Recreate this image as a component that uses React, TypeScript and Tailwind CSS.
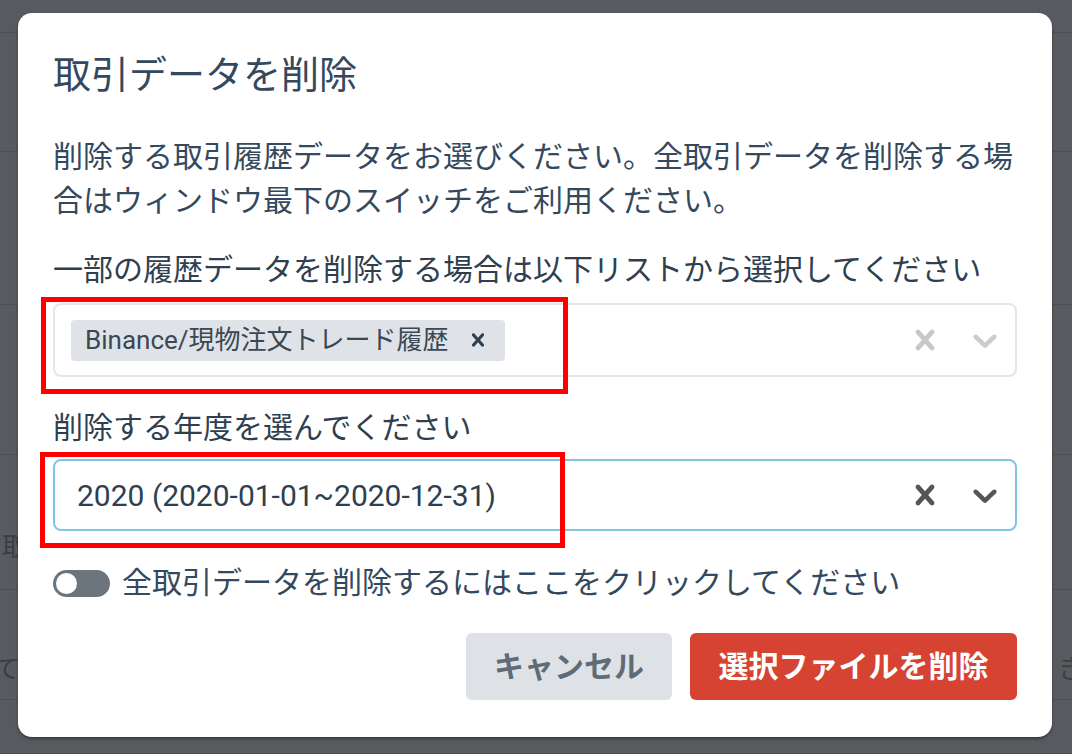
import React from 'react';

const font = { fontFamily: 'Roboto, "Noto Sans CJK JP", sans-serif' };

const CrossIcon = ({ className }: { className: string }) => (
  <svg viewBox="0 0 20 20" className={className} fill="currentColor">
    <path d="M14.348 14.849c-0.469 0.469-1.229 0.469-1.697 0l-2.651-3.030-2.651 3.029c-0.469 0.469-1.229 0.469-1.697 0-0.469-0.469-0.469-1.229 0-1.697l2.758-3.15-2.759-3.152c-0.469-0.469-0.469-1.228 0-1.697s1.228-0.469 1.697 0l2.652 3.031 2.651-3.031c0.469-0.469 1.228-0.469 1.697 0s0.469 1.229 0 1.697l-2.758 3.152 2.758 3.15c0.469 0.469 0.469 1.229 0 1.698z" />
  </svg>
);

const ChevronIcon = ({ className }: { className: string }) => (
  <svg viewBox="0 0 20 20" className={className} fill="currentColor">
    <path d="M4.516 7.548c0.436-0.446 1.043-0.481 1.576 0l3.908 3.747 3.908-3.747c0.533-0.481 1.141-0.446 1.574 0 0.436 0.445 0.408 1.197 0 1.615-0.406 0.418-4.695 4.502-4.695 4.502-0.217 0.223-0.502 0.335-0.787 0.335s-0.57-0.112-0.789-0.335c0 0-4.287-4.084-4.695-4.502s-0.436-1.17 0-1.615z" />
  </svg>
);

// rows of the page that sits behind the overlay
const bgRows = [33, 119, 153, 150, 135, 110, 54];

export default function App() {
  return (
    <div className="relative h-[754px] w-[1072px] overflow-hidden bg-[#575b5f]" style={font}>
      <div className="flex flex-col">
        {bgRows.map((h, i) => (
          <div key={i} className="relative border-b border-[#4b4f52]" style={{ height: h }} />
        ))}
      </div>
      <span className="absolute left-[2px] top-[528px] text-[26px] text-[#3a3e41]">取</span>
      <span className="absolute left-[-6px] top-[650px] text-[26px] text-[#3a3e41]">て</span>
      <span className="absolute left-[1058px] top-[650px] text-[26px] text-[#3a3e41]">き</span>

      <div className="absolute left-[18px] top-[13px] flex h-[724px] w-[1034px] flex-col rounded-[14px] bg-white px-[35px] pt-[42px] shadow-[0_2px_3px_rgba(0,0,0,0.35)]">
        <h2 className="text-[38px] leading-[40px] text-[#34495e]">取引データを削除</h2>

        <p className="mt-[40px] text-[30px] leading-[44px] text-[#34495e]">
          削除する取引履歴データをお選びください。全取引データを削除する場合はウィンドウ最下のスイッチをご利用ください。
        </p>

        <label className="mt-[25px] text-[30px] leading-[44px] text-[#2f3f4f]">
          一部の履歴データを削除する場合は以下リストから選択してください
        </label>
        <div className="mt-[11px] flex h-[74px] items-center rounded-[8px] border-2 border-[#e4e6e9] pl-[16px] pr-[10px]">
          <div className="flex h-[41px] items-center rounded-[4px] bg-[#dfe3e7] pl-[14px] pr-[14px]">
            <span className="text-[26px] text-[#3a4856]">Binance/現物注文トレード履歴</span>
            <CrossIcon className="ml-[16px] h-[26px] w-[26px] text-[#2f3f4f]" />
          </div>
          <div className="flex-1" />
          <CrossIcon className="h-[40px] w-[40px] text-[#c8c8c8]" />
          <ChevronIcon className="ml-[20px] h-[40px] w-[40px] text-[#cccccc]" />
        </div>

        <label className="mt-[29px] text-[30px] leading-[44px] text-[#2f3f4f]">削除する年度を選んでください</label>
        <div className="mt-[9px] flex h-[72px] items-center rounded-[8px] border-2 border-[#80c4e6] pl-[22px] pr-[10px]">
          <span className="flex-1 text-[30px] text-[#2f3f4f]">2020 (2020-01-01~2020-12-31)</span>
          <CrossIcon className="h-[40px] w-[40px] text-[#555555]" />
          <ChevronIcon className="ml-[20px] h-[40px] w-[40px] text-[#555555]" />
        </div>

        <div className="mt-[30px] flex h-[44px] items-center">
          <div className="flex h-[27px] w-[57px] items-center rounded-full bg-[#6c757d] px-[3px]">
            <div className="h-[21px] w-[21px] rounded-full bg-white" />
          </div>
          <span className="ml-[12px] text-[30px] leading-[44px] text-[#34495e]">
            全取引データを削除するにはここをクリックしてください
          </span>
        </div>

        <div className="mt-[28px] flex justify-end gap-[18px]">
          <button className="h-[67px] w-[206px] rounded-[6px] bg-[#dee2e6] text-[30px] font-bold text-[#5f6b76]">
            キャンセル
          </button>
          <button className="h-[67px] w-[327px] rounded-[6px] bg-[#d64333] text-[30px] font-bold text-white">
            選択ファイルを削除
          </button>
        </div>
      </div>

      <div className="absolute left-[41px] top-[297px] h-[97px] w-[527px] border-[5px] border-[#ff0000]" />
      <div className="absolute left-[40px] top-[452px] h-[96px] w-[525px] border-[5px] border-[#ff0000]" />
    </div>
  );
}
